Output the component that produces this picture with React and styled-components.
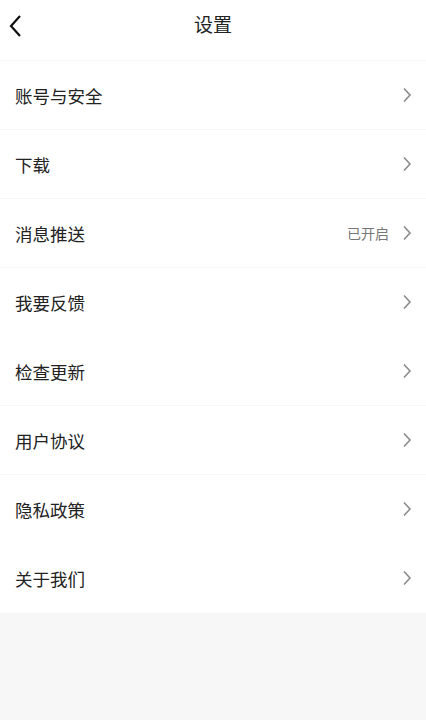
import React from 'react';
import styled, { createGlobalStyle } from 'styled-components';

const GlobalStyle = createGlobalStyle`
    html, body {
        margin: 0;
        padding: 0;
        background: #f7f7f7;
        font-family: "Noto Sans CJK SC", "Noto Sans", sans-serif;
    }
`;

const Page = styled.div`
    width: 426px;
    min-height: 720px;
    background: #f7f7f7;
`;

const Header = styled.div`
    position: relative;
    display: flex;
    align-items: center;
    justify-content: center;
    height: 46px;
    padding-bottom: 14px;
    background: #fff;
    border-bottom: 1px solid #f6f6f6;
`;

const Back = styled.button`
    position: absolute;
    left: 6px;
    top: 12px;
    display: flex;
    border: 0;
    padding: 2px;
    background: none;
`;

const Title = styled.h1`
    margin: 0;
    font-size: 19px;
    font-weight: 400;
    color: #222;
`;

const List = styled.div`
    background: #fff;
`;

const Row = styled.div`
    display: flex;
    align-items: center;
    height: 68px;
    padding: 0 14px 0 15px;
    border-bottom: 1px solid ${p => (p.line ? '#f6f6f6' : '#fff')};
`;

const Label = styled.span`
    flex: 1;
    font-size: 17.5px;
    color: #222;
`;

const Value = styled.span`
    margin-right: 13px;
    font-size: 14px;
    color: #777;
`;

const Chevron = () => (
    <svg width="10" height="16" viewBox="0 0 10 16" fill="none">
        <path d="M2 1.5 L8 8 L2 14.5" stroke="#8a8a8a" strokeWidth="1.6" />
    </svg>
);

const items = [
    { label: '账号与安全', line: true },
    { label: '下载', line: true },
    { label: '消息推送', value: '已开启', line: true },
    { label: '我要反馈' },
    { label: '检查更新', line: true },
    { label: '用户协议', line: true },
    { label: '隐私政策' },
    { label: '关于我们' },
];

const App = () => (
    <Page>
        <GlobalStyle />
        <Header>
            <Back>
                <svg width="16" height="24" viewBox="0 0 16 24" fill="none">
                    <path d="M12 2 L3 12 L12 22" stroke="#111" strokeWidth="2.2" />
                </svg>
            </Back>
            <Title>设置</Title>
        </Header>
        <List>
            {items.map(item => (
                <Row key={item.label} line={item.line}>
                    <Label>{item.label}</Label>
                    {item.value && <Value>{item.value}</Value>}
                    <Chevron />
                </Row>
            ))}
        </List>
    </Page>
);

export default App;
